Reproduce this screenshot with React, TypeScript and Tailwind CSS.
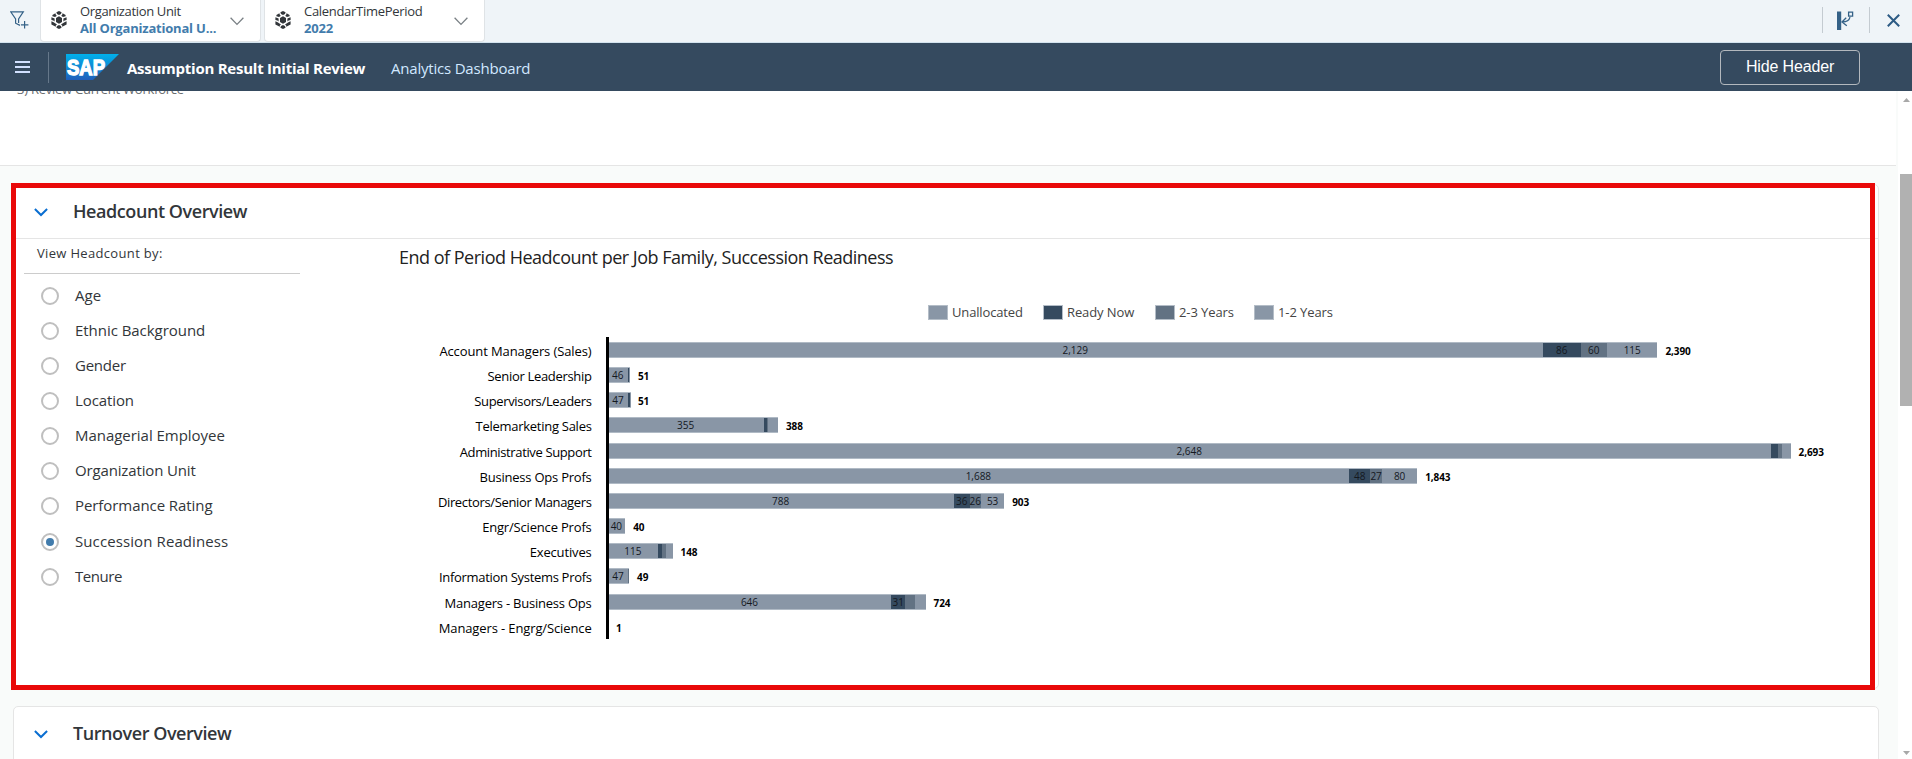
import React from "react";

const SCALE = 0.4393;

const SERIES = [
  { name: "Unallocated", color: "bg-[#8996a6]", text: "w-[71px] tracking-[-0.15px]", gap: "mr-[20px]" },
  { name: "Ready Now", color: "bg-[#354a5f]", text: "w-[68px] tracking-[-0.1px]", gap: "mr-[20px]" },
  { name: "2-3 Years", color: "bg-[#627283]", text: "w-[55px] tracking-[-0.1px]", gap: "mr-[20px]" },
  { name: "1-2 Years", color: "bg-[#8996a6]", text: "w-[55px] tracking-[-0.1px]", gap: "" },
];

const ROWS: { label: string; tracking: string; values: number[]; total: number }[] = [
  { label: "Account Managers (Sales)", tracking: "tracking-[-0.1px]", values: [2129, 86, 60, 115], total: 2390 },
  { label: "Senior Leadership", tracking: "tracking-[-0.32px]", values: [46, 3, 0, 2], total: 51 },
  { label: "Supervisors/Leaders", tracking: "tracking-[-0.34px]", values: [47, 3, 0, 1], total: 51 },
  { label: "Telemarketing Sales", tracking: "tracking-[-0.27px]", values: [355, 7, 4, 22], total: 388 },
  { label: "Administrative Support", tracking: "tracking-[-0.37px]", values: [2648, 16, 9, 20], total: 2693 },
  { label: "Business Ops Profs", tracking: "tracking-[-0.22px]", values: [1688, 48, 27, 80], total: 1843 },
  { label: "Directors/Senior Managers", tracking: "tracking-[-0.35px]", values: [788, 36, 26, 53], total: 903 },
  { label: "Engr/Science Profs", tracking: "tracking-[-0.18px]", values: [40, 0, 0, 0], total: 40 },
  { label: "Executives", tracking: "tracking-[-0.15px]", values: [115, 8, 9, 16], total: 148 },
  { label: "Information Systems Profs", tracking: "tracking-[-0.31px]", values: [47, 0, 2, 0], total: 49 },
  { label: "Managers - Business Ops", tracking: "tracking-[-0.22px]", values: [646, 31, 23, 24], total: 724 },
  { label: "Managers - Engrg/Science", tracking: "tracking-[-0.12px]", values: [1, 0, 0, 0], total: 1 },
];

const OPTIONS = [
  { name: "Age", tracking: "tracking-[0.1px]" },
  { name: "Ethnic Background", tracking: "tracking-[-0.04px]" },
  { name: "Gender", tracking: "tracking-[-0.25px]" },
  { name: "Location", tracking: "tracking-[-0.1px]" },
  { name: "Managerial Employee", tracking: "tracking-[-0.03px]" },
  { name: "Organization Unit", tracking: "tracking-[-0.15px]" },
  { name: "Performance Rating", tracking: "tracking-[-0.07px]" },
  { name: "Succession Readiness", tracking: "tracking-[0.1px]" },
  { name: "Tenure", tracking: "tracking-[-0.45px]" },
];

function CubeIcon() {
  return (
    <svg width="16" height="18" viewBox="0 0 16 18" className="shrink-0" fill="#32363a">
      <path d="M8 5.2 11 6.9V11.1L8 12.8 5 11.1V6.9Z" />
      <path d="M8 0 10.6 1.3 10 3 8 4 6 3 5.4 1.3Z" />
      <path d="M8 18 10.6 16.7 10 15 8 14 6 15 5.4 16.7Z" />
      <path d="M1.4 4 4.4 2.2 5 4.2 6 4.8 4 6.1 1.4 5.2Z" />
      <path d="M14.6 4 11.6 2.2 11 4.2 10 4.8 12 6.1 14.6 5.2Z" />
      <path d="M0.4 6.2 3.6 7.4V10.6L2.4 9.6 0.4 9Z" />
      <path d="M15.6 6.2 12.4 7.4V10.6L13.6 9.6 15.6 9Z" />
      <path d="M0.4 10.2 2.6 11.2 6 13.4 4.8 14.4V15.8L0.4 13.4Z" />
      <path d="M15.6 10.2 13.4 11.2 10 13.4 11.2 14.4V15.8L15.6 13.4Z" />
    </svg>
  );
}

function FilterTile({ title, value, titleClass, valueClass }: { title: string; value: string; titleClass: string; valueClass: string }) {
  return (
    <div className="flex h-[42px] w-[221px] items-start rounded-b-[4px] border border-t-0 border-[#dfe3e6] bg-white pl-[10px]">
      <div className="pt-[11px]">
        <CubeIcon />
      </div>
      <div className="ml-[13px] w-[150px] pt-[3px] leading-[17px] whitespace-nowrap">
        <div className={"text-[13px] text-[#32363a] " + titleClass}>{title}</div>
        <div className={"text-[13px] font-bold text-[#427cac] " + valueClass}>{value}</div>
      </div>
      <svg width="14" height="9" viewBox="0 0 14 9" className="mt-[17px]" fill="none" stroke="#7a8085" strokeWidth="1.3">
        <path d="M0.6 0.8 7 7.4 13.4 0.8" />
      </svg>
    </div>
  );
}

function SectionHeader({ title, titleClass }: { title: string; titleClass: string }) {
  return (
    <div className="flex h-[54px] items-center border-b border-[#e5e5e5] pl-[20px]">
      <svg width="14" height="9" viewBox="0 0 14 9" className="mt-px" fill="none" stroke="#0a6ed1" strokeWidth="2">
        <path d="M0.9 1 7 7 13.1 1" />
      </svg>
      <h2 className={"ml-[25px] pb-[2px] text-[18px] leading-[24px] font-semibold text-[#32363a] " + titleClass}>{title}</h2>
    </div>
  );
}

function Chart() {
  return (
    <div className="w-[1460px] pt-[5px]">
      <div className="ml-[8px] text-[18px] leading-[26px] tracking-[-0.5px] text-[#222]">
        End of Period Headcount per Job Family, Succession Readiness
      </div>
      <div className="mt-[34px] ml-[537px] flex h-[16px] items-center">
        {SERIES.map((s) => (
          <div key={s.name} className={"flex items-center " + s.gap}>
            <span className={"mr-[4px] h-[15px] w-[20px] border border-[#b4bdc7] " + s.color} />
            <span className={"text-[13px] leading-[16px] whitespace-nowrap text-[#444] " + s.text}>{s.name}</span>
          </div>
        ))}
      </div>
      <div className="relative mt-[17.4px]">
        {ROWS.map((row) => (
          <div key={row.label} className="flex h-[25.17px] items-center">
            <div className={"w-[200.6px] pt-[2px] text-right text-[13px] leading-[18px] whitespace-nowrap text-black " + row.tracking}>
              {row.label}
            </div>
            <div className="ml-[16px] flex h-[16px]">
              {row.values.map((v, i) =>
                v > 0 ? (
                  <div
                    key={i}
                    style={{ width: v * SCALE }}
                    className={
                      "flex items-center justify-center border-y border-[#b0bac5] text-[10px] leading-none whitespace-nowrap text-[#14181e] " +
                      SERIES[i].color
                    }
                  >
                    {v > 25 ? v.toLocaleString("en-US") : ""}
                  </div>
                ) : null
              )}
            </div>
            <div className="ml-[8px] pt-[2px] text-[10px] leading-[12px] font-bold tracking-[-0.1px] text-black">
              {row.total.toLocaleString("en-US")}
            </div>
          </div>
        ))}
        <div className="absolute top-0 left-[215px] h-[302px] w-[3px] bg-black" />
      </div>
    </div>
  );
}

export default function App() {
  return (
    <div className="flex h-[759px] w-[1912px] flex-col overflow-hidden bg-white font-['Open_Sans',sans-serif]">
      <div className="flex h-[43px] shrink-0 border-b border-[#d3e3ee] bg-[#eff4f8]">
        <svg width="19" height="18" viewBox="0 0 19 18" className="mt-[11px] mr-[11px] ml-[10px]" fill="none" stroke="#346187" strokeWidth="1.2">
          <path d="M10 14.4 5.6 12.2V8L0.7 0.8H13.3L8.6 8V12" />
          <path d="M14.6 10V17.4M11 13.8H18.4" />
        </svg>
        <div className="flex gap-[3px]">
          <FilterTile title="Organization Unit" value="All Organizational U..." titleClass="tracking-[-0.35px]" valueClass="tracking-[-0.2px]" />
          <FilterTile title="CalendarTimePeriod" value="2022" titleClass="tracking-[-0.3px]" valueClass="tracking-[-0.2px]" />
        </div>
        <div className="ml-auto flex">
          <div className="mt-[7px] h-[26px] w-px bg-[#c4cbd1]" />
          <svg width="17" height="20" viewBox="0 0 17 20" className="mt-[11px] ml-[14px]" fill="none" stroke="#346187" strokeWidth="1.3">
            <path d="M0 0.5H4.2V19H0Z" fill="#346187" stroke="none" />
            <path d="M11.6 1.2H15.6V5.2H11.6Z" />
            <path d="M13 6.2C12.4 8.8 10 11 5.4 11M9.2 6.8 5 11 9.8 14.8" />
          </svg>
          <div className="mt-[7px] ml-[15px] h-[26px] w-px bg-[#c4cbd1]" />
          <svg width="13" height="13" viewBox="0 0 13 13" className="mt-[14px] mr-[12px] ml-[17px]" stroke="#2d5b85" strokeWidth="2">
            <path d="M0.8 0.8 12.2 12.2M12.2 0.8 0.8 12.2" />
          </svg>
        </div>
      </div>

      <header className="flex h-[48px] shrink-0 items-center bg-[#354a5f]">
        <svg width="15" height="12" viewBox="0 0 15 12" className="ml-[15px]" fill="#d1e0ff">
          <path d="M0 0H15V2H0ZM0 5H15V7H0ZM0 10H15V12H0Z" />
        </svg>
        <div className="ml-[18px] h-[31px] w-px bg-[#66788a]" />
        <svg width="53" height="26" viewBox="0 0 53 26" className="ml-[17px]">
          <defs>
            <linearGradient id="logo" x1="0" y1="0" x2="0" y2="1">
              <stop offset="0" stopColor="#00b1eb" />
              <stop offset="1" stopColor="#1e5fbb" />
            </linearGradient>
          </defs>
          <path d="M0 0H53L27 26H0Z" fill="url(#logo)" />
          <text x="1" y="20.5" fontFamily="Liberation Sans" fontWeight="bold" fontSize="21.5" fill="#fff" stroke="#fff" strokeWidth="1.4" textLength="38" lengthAdjust="spacingAndGlyphs">
            SAP
          </text>
        </svg>
        <div className="ml-[8px] w-[264px] pt-px text-[15px] leading-[20px] font-bold tracking-[-0.25px] whitespace-nowrap text-white">
          Assumption Result Initial Review
        </div>
        <div className="pt-px text-[15px] leading-[20px] tracking-[-0.2px] text-[#d1e8ff]">Analytics Dashboard</div>
        <button className="mr-[52px] ml-auto h-[35px] w-[140px] rounded-[4px] border border-[#b3b8bd] font-['Liberation_Sans',sans-serif] text-[16px] tracking-[-0.15px] text-white">
          Hide Header
        </button>
      </header>

      <div className="flex min-h-0 flex-1">
        <main className="w-[1898px] overflow-hidden bg-[#f9fbfa]">
          <div className="h-[75px] w-[1896px] overflow-hidden border-b border-[#e5e5e5] bg-white">
            <div className="-mt-[11px] ml-[17px] text-[13px] leading-[18px] tracking-[-0.25px] text-[#6a6d70]">3) Review Current Workforce</div>
          </div>

          <div className="relative mt-[18px] ml-[13px] w-[1866px]">
            <section className="h-[505px] rounded-[5px] border border-[#e5e5e5] bg-white">
              <SectionHeader title="Headcount Overview" titleClass="tracking-[-0.43px]" />
              <div className="flex">
                <div className="mr-[91px] ml-[10px] w-[276px]">
                  <div className="h-[35px] border-b border-[#ccc] pt-[5px] pl-[13px] text-[13px] leading-[18px] tracking-[0.33px] text-[#32363a]">
                    View Headcount by:
                  </div>
                  <div className="mt-[4px] ml-[17px]">
                    {OPTIONS.map((o) => (
                      <div key={o.name} className="flex h-[35.15px] items-center">
                        <span className="flex size-[18px] items-center justify-center rounded-full border-2 border-[#bfbfbf] bg-white">
                          {o.name === "Succession Readiness" && <span className="size-[8px] rounded-full bg-[#427cac]" />}
                        </span>
                        <span className={"ml-[16px] pb-[2px] text-[15px] leading-[20px] text-[#32363a] " + o.tracking}>{o.name}</span>
                      </div>
                    ))}
                  </div>
                </div>
                <Chart />
              </div>
            </section>
            <div className="absolute -top-px -left-[2px] h-[507px] w-[1864px] border-[5px] border-[#e90909]" />
          </div>

          <section className="mt-[17px] ml-[13px] h-[120px] w-[1866px] rounded-[5px] border border-[#e5e5e5] bg-white">
            <SectionHeader title="Turnover Overview" titleClass="tracking-[-0.45px]" />
          </section>
        </main>

        <div className="flex w-[14px] flex-col items-end bg-white">
          <svg width="7" height="4" viewBox="0 0 7 4" className="mt-[7px] mr-[2px]" fill="#a8a8a8">
            <path d="M0 4 3.5 0 7 4Z" />
          </svg>
          <div className="mt-[72px] h-[232px] w-[12px] bg-[#b1b1b1]" />
          <svg width="7" height="4" viewBox="0 0 7 4" className="mt-auto mr-[2px] mb-[4px]" fill="#a8a8a8">
            <path d="M0 0 3.5 4 7 0Z" />
          </svg>
        </div>
      </div>
    </div>
  );
}
